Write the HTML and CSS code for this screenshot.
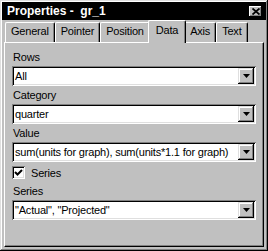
FILE: index.html
```html
<!DOCTYPE html>
<html lang="en">
<head>
  <meta charset="UTF-8" />
  <title>Properties - gr_1</title>
  <link rel="stylesheet" href="styles.css">
</head>
<body>
  <div class="window">
    <div class="titlebar">
      <span class="title">Properties -  gr_1</span>
      <span class="close">
        <svg width="8" height="7" viewBox="0 0 8 7"><path d="M0.5 0.5L7.5 6.5M7.5 0.5L0.5 6.5" stroke="#000" stroke-width="1.8"/></svg>
      </span>
    </div>

    <div class="tabs">
      <div class="tab">General</div>
      <div class="tab">Pointer</div>
      <div class="tab">Position</div>
      <div class="tab active">Data</div>
      <div class="tab">Axis</div>
      <div class="tab">Text</div>
    </div>

    <div class="panel">
      <div class="field-label">Rows</div>
      <div class="combo">
        <span class="combo-text">All</span>
        <span class="combo-btn"><svg width="7" height="4" viewBox="0 0 7 4"><polygon points="0,0 7,0 3.5,4" fill="#000"/></svg></span>
      </div>

      <div class="field-label">Category</div>
      <div class="combo">
        <span class="combo-text">quarter</span>
        <span class="combo-btn"><svg width="7" height="4" viewBox="0 0 7 4"><polygon points="0,0 7,0 3.5,4" fill="#000"/></svg></span>
      </div>

      <div class="field-label">Value</div>
      <div class="combo">
        <span class="combo-text">sum(units for graph), sum(units*1.1 for graph)</span>
        <span class="combo-btn"><svg width="7" height="4" viewBox="0 0 7 4"><polygon points="0,0 7,0 3.5,4" fill="#000"/></svg></span>
      </div>

      <div class="check-row">
        <span class="checkbox">
          <svg width="9" height="9" viewBox="0 0 9 9"><path d="M1 4L3.5 6.5L8 2" stroke="#000" stroke-width="2" fill="none"/></svg>
        </span>
        <span>Series</span>
      </div>

      <div class="field-label series-label">Series</div>
      <div class="combo">
        <span class="combo-text">"Actual", "Projected"</span>
        <span class="combo-btn"><svg width="7" height="4" viewBox="0 0 7 4"><polygon points="0,0 7,0 3.5,4" fill="#000"/></svg></span>
      </div>
    </div>
  </div>
</body>
</html>
```

FILE: styles.css
```css
body {
  margin: 0;
  background: #c0c0c0;
  font-family: "Liberation Sans", Arial, sans-serif;
  font-size: 11px;
  letter-spacing: -0.2px;
  color: #000;
}

.window {
  width: 268px;
  height: 251px;
  box-sizing: border-box;
  padding: 2px;
  background: #c0c0c0;
  box-shadow: inset -1px -1px #000, inset 1px 1px #dfdfdf,
              inset -2px -2px #808080, inset 2px 2px #fff;
  display: flex;
  flex-direction: column;
}

.titlebar {
  height: 18px;
  flex: none;
  background: #000;
  color: #fff;
  display: flex;
  align-items: center;
  justify-content: space-between;
  padding: 0 4px 0 5px;
}

.title {
  font-weight: bold;
  font-size: 12px;
  letter-spacing: 0;
  white-space: pre;
}

.close {
  width: 13px;
  height: 11px;
  background: #c0c0c0;
  box-shadow: inset -1px -1px #000, inset 1px 1px #fff,
              inset -2px -2px #808080;
  display: flex;
  align-items: center;
  justify-content: center;
}

/* tab strip */
.tabs {
  height: 22px;
  flex: none;
  display: flex;
  align-items: flex-end;
  padding-left: 3px;
}

.tab {
  height: 20px;
  box-sizing: border-box;
  padding: 2px 5px 0;
  line-height: 13px;
  border-top: 1px solid #fff;
  border-left: 1px solid #fff;
  border-right: 1px solid #000;
  border-radius: 2px 2px 0 0;
  box-shadow: inset -1px 0 #808080;
}

.tab.active {
  position: relative;
  z-index: 1;
  height: 23px;
  margin: 0 -2px -1px;
  padding: 3px 7px 0;
  background: #c0c0c0;
}

.panel {
  flex: 1;
  margin: 0 2px 2px;
  border: 1px solid;
  border-color: #fff #000 #000 #fff;
  box-shadow: inset -1px -1px #808080;
  padding: 8px 7px 0;
}

.field-label {
  line-height: 13px;
  padding-left: 1px;
  margin-bottom: 2px;
}

.series-label {
  margin-top: 6px;
}

.combo {
  height: 20px;
  box-sizing: border-box;
  padding: 2px;
  margin-bottom: 3px;
  background: #fff;
  box-shadow: inset 1px 1px #808080, inset -1px -1px #fff,
              inset 2px 2px #000, inset -2px -2px #dfdfdf;
  display: flex;
}

.combo-text {
  flex: 1;
  line-height: 16px;
  padding-left: 1px;
  white-space: nowrap;
  overflow: hidden;
}

.combo-btn {
  width: 16px;
  height: 16px;
  background: #c0c0c0;
  box-shadow: inset -1px -1px #000, inset 1px 1px #dfdfdf,
              inset -2px -2px #808080, inset 2px 2px #fff;
  display: flex;
  align-items: center;
  justify-content: center;
}

.check-row {
  display: flex;
  align-items: center;
  gap: 6px;
  height: 13px;
  margin-top: 4px;
}

.checkbox {
  width: 13px;
  height: 13px;
  box-sizing: border-box;
  background: #fff;
  box-shadow: inset 1px 1px #808080, inset -1px -1px #fff,
              inset 2px 2px #000, inset -2px -2px #dfdfdf;
  display: flex;
  align-items: center;
  justify-content: center;
}
```
